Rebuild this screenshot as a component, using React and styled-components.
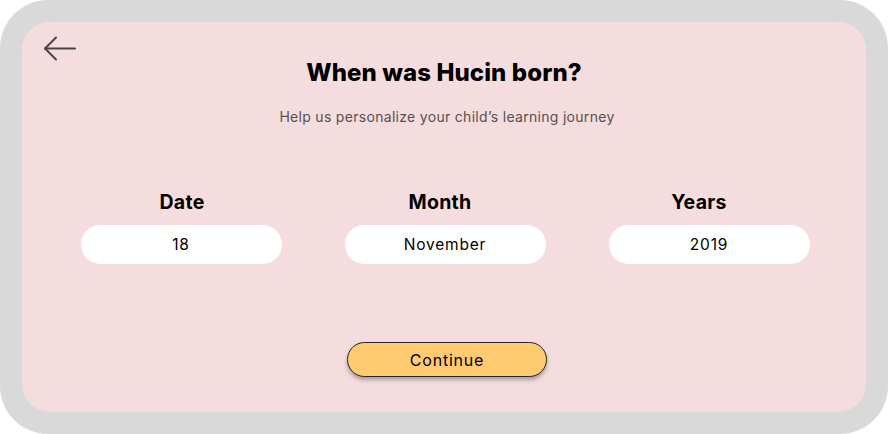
import React from "react";
import styled, { createGlobalStyle } from "styled-components";

const Global = createGlobalStyle`
  html, body { margin: 0; padding: 0; background: #ffffff; }
  * { box-sizing: border-box; }
`;

const Frame = styled.div`
  width: 888px;
  height: 434px;
  background: #d9d9d9;
  border-radius: 48px;
  padding: 22px;
`;

const Panel = styled.div`
  height: 100%;
  background: #f5dddf;
  border-radius: 28px;
  display: flex;
  flex-direction: column;
  align-items: center;
  padding: 12px 0 0;
`;

const Header = styled.div`
  width: 100%;
  display: grid;
  grid-template-columns: 120px 1fr 120px;
  align-items: start;
`;

const BackButton = styled.button`
  border: none;
  background: none;
  padding: 0;
  margin: 2px 0 0 21px;
  width: 34px;
  height: 26px;
  color: #4a4545;
  cursor: pointer;
  display: flex;
`;

const TitleWrap = styled.div`
  display: flex;
  justify-content: center;
`;

const Title = styled.h1`
  margin: 23px 0 0;
  text-align: center;
  font-family: Inter, "Open Sans", sans-serif;
  font-weight: 800;
  font-size: 24px;
  line-height: 32px;
  color: #000;
  letter-spacing: 0.1px;
`;

const Subtitle = styled.p`
  margin: 19px 0 0 6px;
  font-family: Inter, "Open Sans", sans-serif;
  font-size: 14px;
  line-height: 18px;
  letter-spacing: 0.3px;
  color: #555050;
`;

const Fields = styled.div`
  margin-top: 63px;
  display: grid;
  grid-template-columns: repeat(3, 201px);
  column-gap: 63px;
  margin-left: 2px;
`;

const Field = styled.div`
  display: flex;
  flex-direction: column;
  align-items: center;
`;

const Label = styled.label`
  font-family: Inter, "Open Sans", sans-serif;
  font-weight: 700;
  font-size: 19.5px;
  line-height: 26px;
  letter-spacing: 0.3px;
  color: #000;
  transform: translateX(${(p) => p.$shift || 0}px);
`;

const Input = styled.div`
  margin-top: 10px;
  width: 201px;
  height: 39px;
  border-radius: 20px;
  background: #ffffff;
  display: flex;
  align-items: center;
  justify-content: center;
  font-family: Inter, "Open Sans", sans-serif;
  font-size: 15.5px;
  letter-spacing: 0.8px;
  color: #000;
`;

const ContinueButton = styled.button`
  margin-top: 78px;
  margin-left: 6px;
  width: 200px;
  height: 35px;
  border-radius: 18px;
  background: #ffca70;
  border: 1px solid #2a2420;
  box-shadow: 0 3px 4px rgba(0, 0, 0, 0.3);
  font-family: Inter, "Open Sans", sans-serif;
  font-size: 16px;
  letter-spacing: 0.8px;
  color: #000;
  cursor: pointer;
`;

const ArrowIcon = () => (
  <svg width="34" height="26" viewBox="0 0 34 26" fill="none" stroke="currentColor" strokeWidth="2" strokeLinecap="round" strokeLinejoin="round">
    <path d="M32 12.5H2" />
    <path d="M13 1.5L2 12.5L13 23.5" />
  </svg>
);

export default function App() {
  return (
    <>
      <Global />
      <Frame>
        <Panel>
          <Header>
            <BackButton aria-label="Back"><ArrowIcon /></BackButton>
            <TitleWrap>
              <Title>When was Hucin born?</Title>
            </TitleWrap>
            <div />
          </Header>
          <Subtitle>Help us personalize your child’s learning journey</Subtitle>
          <Fields>
            <Field>
              <Label $shift={1}>Date</Label>
              <Input>18</Input>
            </Field>
            <Field>
              <Label $shift={-5}>Month</Label>
              <Input>November</Input>
            </Field>
            <Field>
              <Label $shift={-10}>Years</Label>
              <Input>2019</Input>
            </Field>
          </Fields>
          <ContinueButton>Continue</ContinueButton>
        </Panel>
      </Frame>
    </>
  );
}
